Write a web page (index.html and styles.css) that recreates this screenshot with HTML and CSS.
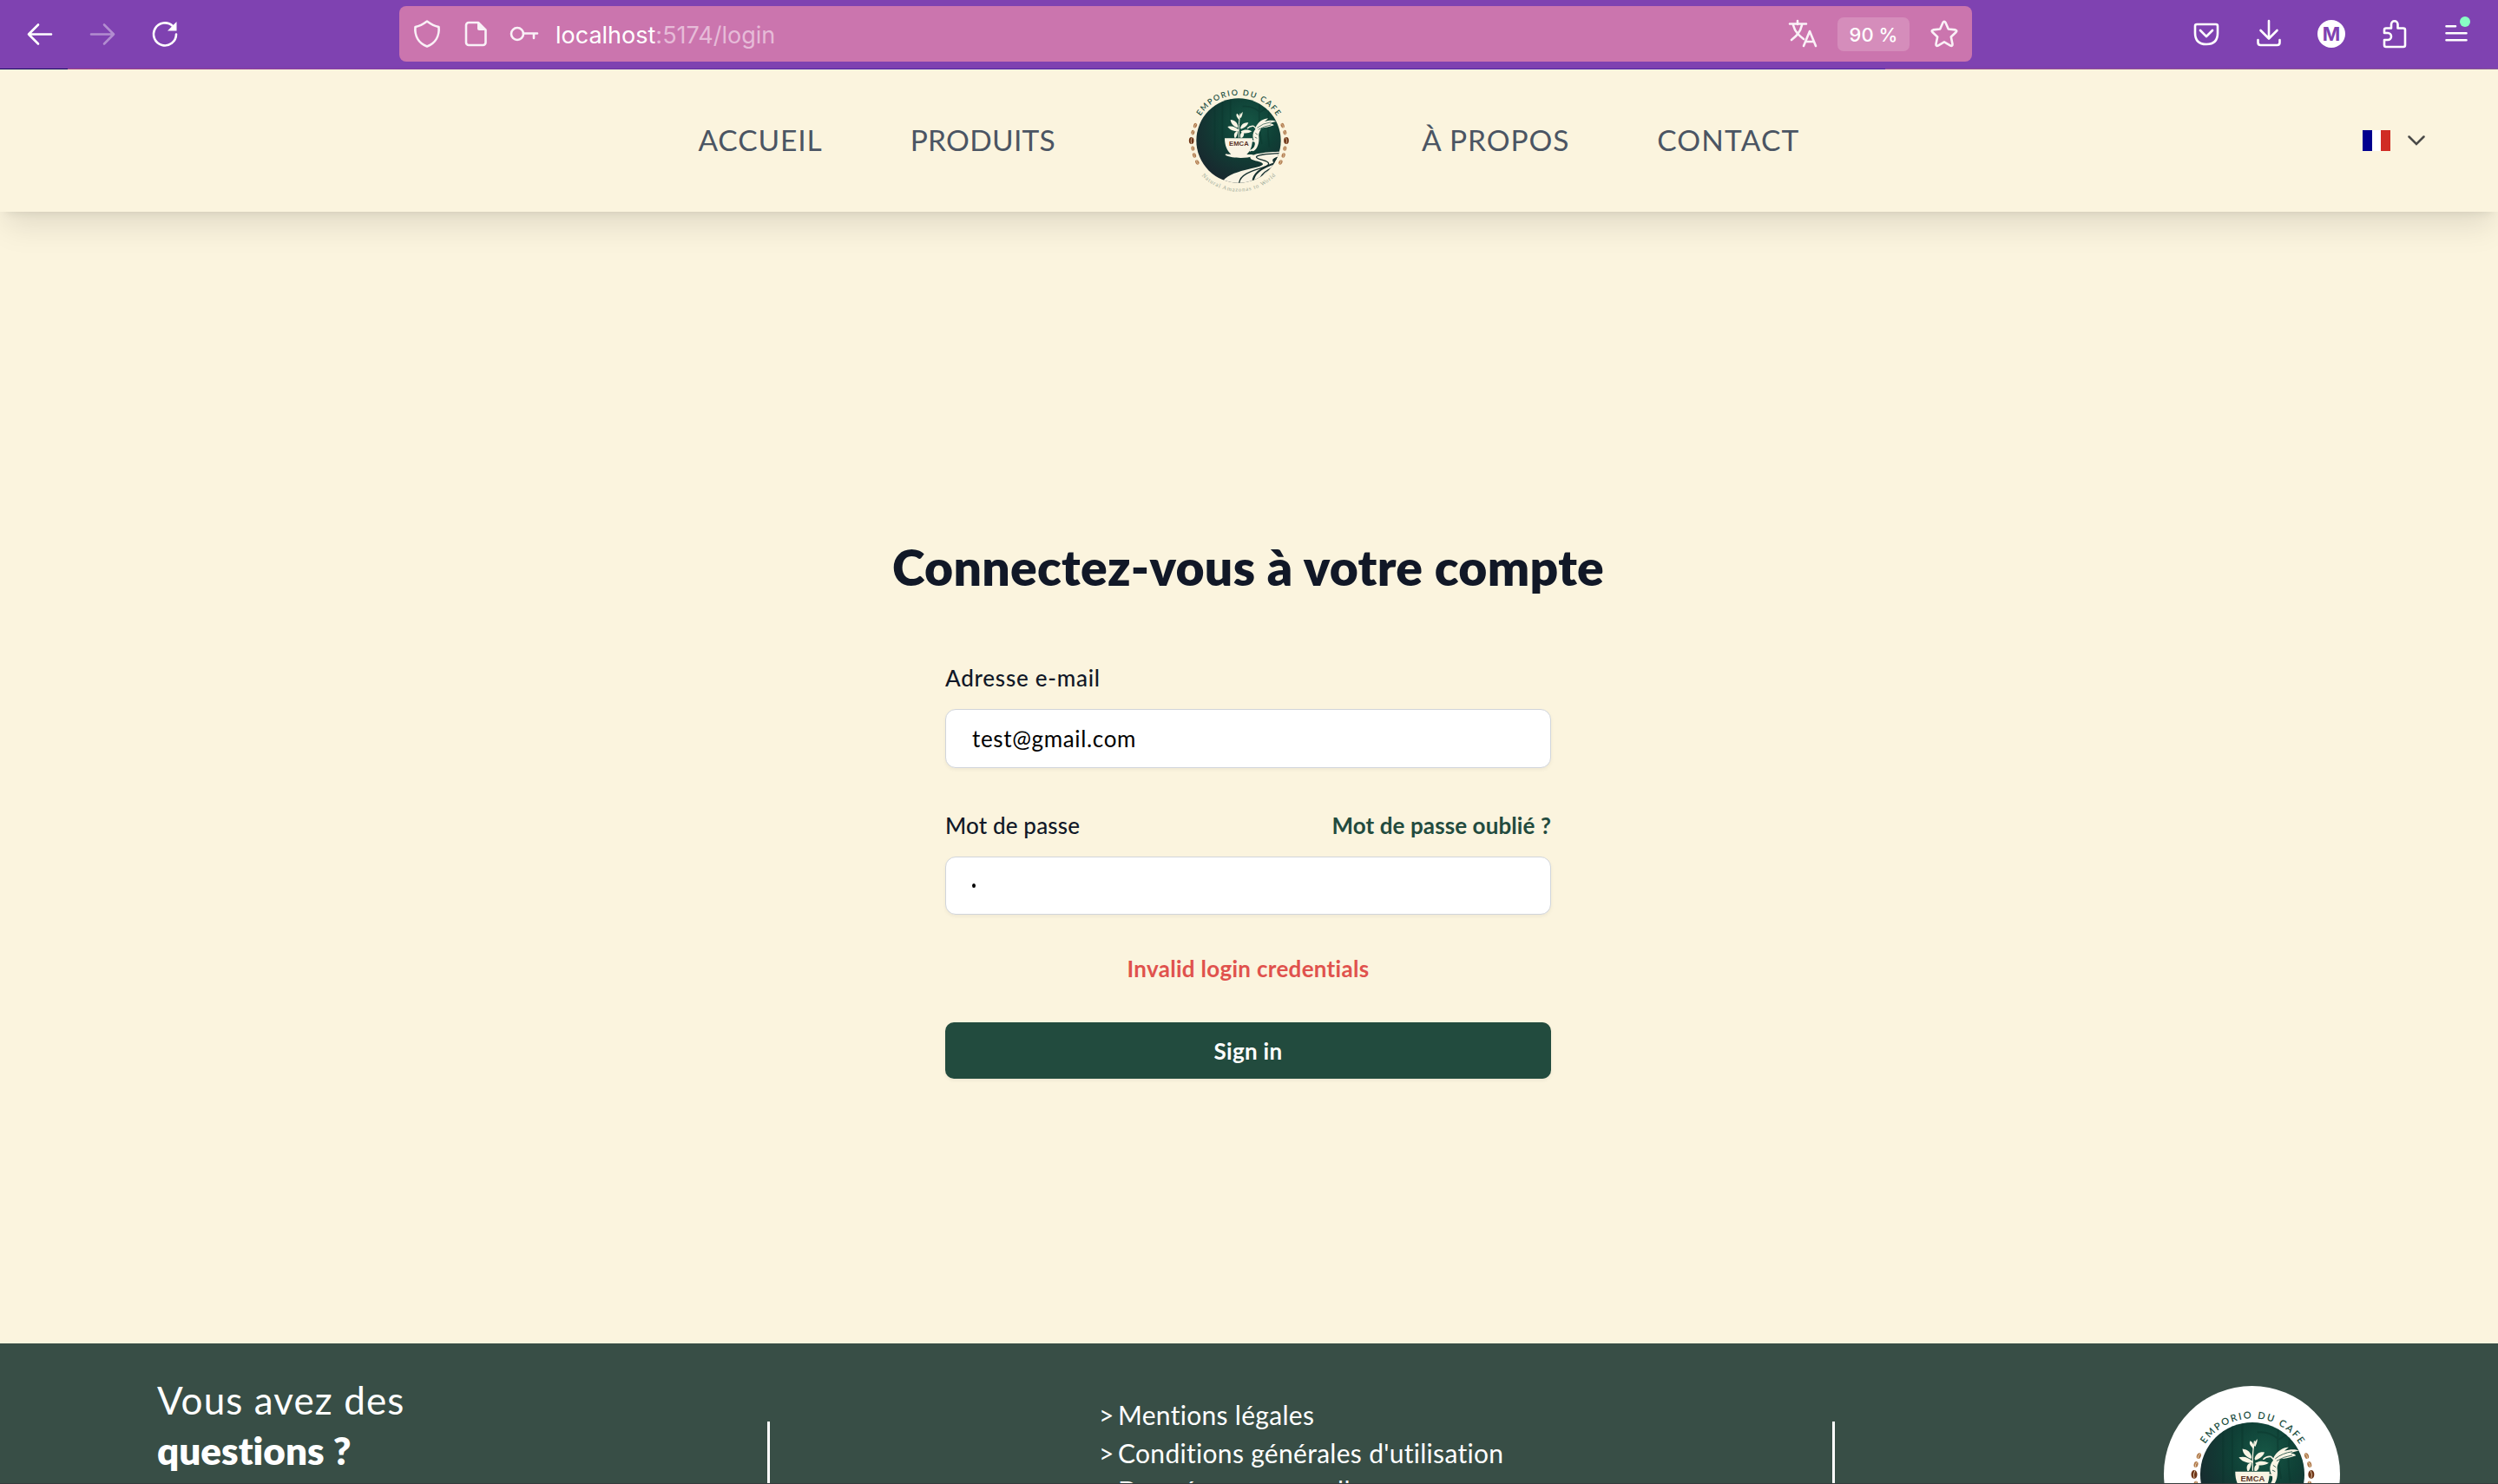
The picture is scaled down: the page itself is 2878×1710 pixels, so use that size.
FILE: index.html
```
<!DOCTYPE html>
<html lang="fr">
<head>
<meta charset="utf-8">
<title>Emporio du Café – Connexion</title>
<link rel="stylesheet" href="styles.css">
</head>
<body>
<svg class="defs" aria-hidden="true">
  <defs>
    <radialGradient id="forest" cx="0.62" cy="0.3" r="0.75">
      <stop offset="0" stop-color="#165645"/>
      <stop offset="0.45" stop-color="#0f4036"/>
      <stop offset="1" stop-color="#19272e"/>
    </radialGradient>
    <clipPath id="disc"><circle cx="260" cy="248" r="146"/></clipPath>
    <path id="arc-top" d="M103 248a157 157 0 0 1 314 0"/>
    <path id="arc-bottom" d="M90 248a170 170 0 0 0 340 0"/>
    <g id="bean">
      <ellipse rx="6" ry="8.5" fill="#b07a4d"/>
      <path d="M2-8q-5 8-2 16" fill="none" stroke="#f0dfc0" stroke-width="1.8"/>
    </g>
    <g id="beans">
      <use href="#bean" transform="translate(110 196) rotate(20)"/>
      <use href="#bean" transform="translate(102 220) rotate(12)"/>
      <g transform="translate(97 248)"><ellipse rx="8.5" ry="12" fill="#6f3517"/><path d="M2-11q-6 11-2 22" fill="none" stroke="#f0dfc0" stroke-width="2"/></g>
      <use href="#bean" transform="translate(102 275) rotate(-8)"/>
      <use href="#bean" transform="translate(107 299) rotate(-16)"/>
      <use href="#bean" transform="translate(117 323) rotate(-28)"/>
    </g>
  </defs>
  <symbol id="logo" viewBox="80 68 360 360">
    <circle cx="260" cy="248" r="146" fill="url(#forest)"/>
    <g clip-path="url(#disc)">
      <g fill="none" stroke="#0b352c" stroke-width="5" opacity=".45">
        <path d="M178 110v170M204 104v150M232 100v90M334 110q-8 60 6 150M366 140q-10 50 0 130M334 150q30-22 50-18M334 150q-26-24-60-20"/>
      </g>
      <path class="paper" d="M410 286C360 286 300 294 300 306c0 14 44 12 44 24 0 14-120 18-144 66v30h210V318q-16 0-30 2-12-10 30-20Z"/>
      <g fill="none" stroke="#15302f" stroke-linecap="round">
        <path d="M404 292c-50 2-86 6-82 14 8 10 42 10 42 22 0 18-96 20-102 66-1 8 2 14 6 20" stroke-width="4"/>
        <path d="M408 306c-26 2-30 14-22 20-54 18-76 40-76 64 0 10 2 18 8 26" stroke-width="7"/>
        <path d="M408 332c-52 12-82 36-78 76" stroke-width="4"/>
        <path d="M408 346c-40 10-62 30-58 60" stroke-width="6"/>
      </g>
    </g>
    <g class="paper">
      <path d="M212 240h96c0 26-6 44-20 56h14c8 0 12 3 8 6-22 8-72 8-94-3-6-3 0-5 6-4h12c-14-12-22-30-22-55Z"/>
      <path d="M262 212c-14-12-24-16-40-12 8 10 18 16 38 16ZM258 200c-2-14-10-22-26-24 2 14 10 22 24 28ZM266 204c4-14 14-20 28-18-4 12-14 18-26 22ZM268 216c14-8 26-6 38 0-12 8-26 8-36 4ZM262 176c-8-10-12-14-8-22 8 4 10 12 10 20ZM265 168c0-10 4-14 9-20 0 8-2 14-6 22ZM246 238c-4-14 0-20 12-24-2 12-4 18-8 24ZM266 238c-2-12 2-18 12-20 2 10 0 16-6 20Z"/>
      <path d="M318 204C328 180 352 170 362 172c-6 4-10 8-12 10 14-4 30-6 40 0-10 2-18 4-22 7 8 0 12 3 14 6-16 6-30 8-44 10-6 14-10 20-8 30 2 20-4 42-20 50l-6-4c10-8 14-18 12-28-10-16-8-32 2-44Z"/>
    </g>
    <g fill="none" class="paper-line">
      <path d="M261 238q-2-50 5-84" stroke-width="3"/>
      <path d="M290 206q10-10 22-8l8 8" stroke-width="4"/>
      <path d="M304 250q18-4 16 12-1 14-22 22" stroke-width="5"/>
    </g>
    <g stroke="#14473b" stroke-width="2" fill="none"><path d="M324 204q20-16 48-20M328 210q20-12 44-16M318 222l8 6M316 236l8 4"/></g>
    <text class="logo-cup" x="261" y="267" text-anchor="middle" textLength="68">EMCA</text>
    <text class="logo-top"><textPath href="#arc-top" startOffset="50%" text-anchor="middle" textLength="314">EMPORIO DU CAFE</textPath></text>
    <text class="logo-bottom"><textPath href="#arc-bottom" startOffset="50%" text-anchor="middle" textLength="276">Natural Amazonas to World</textPath></text>
    <use href="#beans"/>
    <use href="#beans" transform="matrix(-1 0 0 1 522 0)"/>
  </symbol>
</svg>

<div class="browser">
  <div class="tools tools-left">
    <svg class="ic" viewBox="0 0 32 32"><path d="M29 16.500H3M14 5.500 3 16.500l11 11"/></svg>
    <svg class="ic dim" viewBox="0 0 32 32"><path d="M3 16.500h26M18 5.500l11 11-11 11"/></svg>
    <svg class="ic" viewBox="0 0 32 32"><path d="M29 16.500a13 13 0 1 1-4-9.500"/><path class="solid" d="M29.500 2v10.500H19Z"/></svg>
  </div>
  <div class="urlbar">
    <svg class="ic soft" viewBox="0 0 32 32"><path d="M16 1.500c4 3 8 5.500 13.500 6.500C30.500 18 26 26.500 16 30.500 6 26.500 1.500 18 2.500 8 8 7 12 4.500 16 1.500Z"/></svg>
    <svg class="ic soft" viewBox="0 0 32 32"><path d="M8 3h11l8.500 8.500V26a3 3 0 0 1-3 3H8a3 3 0 0 1-3-3V6a3 3 0 0 1 3-3Z"/><path class="solid" d="M18 3l10 9h-8a2 2 0 0 1-2-2Z"/></svg>
    <svg class="ic soft" viewBox="0 0 32 32"><circle cx="8" cy="16" r="7"/><path d="M15 15.500h16M27 16v5"/></svg>
    <p class="url"><span class="host">localhost</span>:5174/login</p>
    <svg class="ic soft" viewBox="0 0 32 32"><path d="M1 4.500h19M10 1v4M5 6c2 8 7 12 12 16M15 6C13 15 8 19 3 23M17 30l7-17 7 17M19 25h10"/></svg>
    <span class="chip">90 %</span>
    <svg class="ic soft" viewBox="0 0 32 32"><path d="M14.500 3q1.500-2.500 3 0l3.300 7.500 8 .9q2.500.6.8 2.600l-5.800 5.500 1.700 8.300q.2 2.700-2.300 1.800L16 25.400l-7.200 4.200q-2.500.9-2.300-1.800l1.700-8.300L2.400 14q-1.700-2 .8-2.600l8-.9Z"/></svg>
  </div>
  <div class="tools tools-right">
    <svg class="ic" viewBox="0 0 32 32"><path d="M5 5h22q2 0 2 2v8q0 13-13 13T3 15V7q0-2 2-2ZM9 12l7 7 7-7"/></svg>
    <svg class="ic" viewBox="0 0 32 32"><path d="M16 1v20M6.500 12 16 21.500l9.500-9.500M3.500 23v3q0 3 3 3h19q3 0 3-3v-3"/></svg>
    <span class="avatar">M</span>
    <svg class="ic" viewBox="0 0 32 32"><path d="M13 9.500V5a3.700 3.700 0 0 1 7.500 0v4.500H27q2 0 2 2V29q0 2-2 2H7q-2 0-2-2v-6h4a4 4 0 0 0 0-8H5v-3.500q0-2 2-2Z"/></svg>
    <svg class="ic menu" viewBox="0 0 32 32"><path d="M4.500 7.300H15M4.500 15.300h23M4.500 23.300h23"/><circle cx="26" cy="2" r="6"/></svg>
  </div>
</div>

<header class="nav">
  <span></span>
  <nav class="links">
    <a class="l1">ACCUEIL</a>
    <a class="l2">PRODUITS</a>
    <svg class="nav-logo"><use href="#logo"/></svg>
    <a class="l3">À PROPOS</a>
    <a class="l4">CONTACT</a>
  </nav>
  <div class="lang">
    <span class="flag"><i class="blue"></i><i class="white"></i><i class="red"></i></span>
    <svg class="chev" viewBox="0 0 20 12"><path d="M1.500 1.500 10 10l8.500-8.500"/></svg>
  </div>
</header>

<main class="main">
  <h1 class="title">Connectez-vous à votre compte</h1>
  <form class="form">
    <div class="row"><label class="label lb1">Adresse e-mail</label></div>
    <div class="field"><span class="value">test@gmail.com</span></div>
    <div class="row row-2"><label class="label lb2">Mot de passe</label><a class="forgot">Mot de passe oublié ?</a></div>
    <div class="field field-2"><span class="dot"></span></div>
    <p class="error">Invalid login credentials</p>
    <div class="submit">Sign in</div>
  </form>
</main>

<footer class="footer">
  <div class="ask"><p class="ask-1">Vous avez des</p><p class="ask-2">questions ?</p></div>
  <div class="rule"></div>
  <ul class="legal">
    <li><span class="gt">&gt;</span>Mentions légales</li>
    <li><span class="gt">&gt;</span>Conditions générales d'utilisation</li>
    <li><span class="gt">&gt;</span>Données personnelles</li>
  </ul>
  <div class="rule"></div>
  <div class="badge"><svg class="badge-logo"><use href="#logo"/></svg></div>
</footer>
</body>
</html>
```
FILE: styles.css
```
* { box-sizing: border-box; margin: 0; padding: 0; }

body {
  width: 2878px;
  height: 1710px;
  overflow: hidden;
  display: flex;
  flex-direction: column;
  background: #fbf4de;
  color: #111827;
  font-family: Lato, "Liberation Sans", sans-serif;
  font-variant-ligatures: none;
}

.defs { position: absolute; width: 0; height: 0; }

/* Browser toolbar */
.browser {
  flex: none;
  display: flex;
  align-items: flex-start;
  height: 80px;
  background:
    linear-gradient(90deg, #120a5c 0 78px, #a3467f 78px, #8a42a0 400px, #4d28a2 960px, #4d28a2 2172px, #9a5290 2172px, #8a5a90) 0 79px / 100% 1px no-repeat,
    #7f42b1;
}
.tools { display: flex; gap: 40px; padding-top: 23px; }
.tools-left { padding-left: 30px; width: 460px; }
.tools-right { padding-left: 254px; }
.ic { width: 32px; height: 32px; overflow: visible; fill: none; stroke: #fff; stroke-width: 2.6; stroke-linecap: round; stroke-linejoin: round; flex: none; }
.ic .solid { fill: #fff; stroke: none; }
.dim { opacity: .4; }
.soft { opacity: .9; }
.menu circle { fill: #88ffc4; stroke: none; }
.urlbar {
  display: flex;
  align-items: center;
  gap: 24px;
  width: 1812px;
  height: 64px;
  margin-top: 7px;
  padding: 0 16px;
  border-radius: 8px;
  background: #cb75ae;
}
.url { flex: 1; margin-left: -4px; padding-top: 3px; font: 27px/32px Inter, sans-serif; color: #e6bbd8; }
.host { color: #fff; }
.chip { width: 83px; height: 39px; border-radius: 7px; background: #d58dbb; color: #fff; font: 500 22px/40px Inter, sans-serif; text-align: center; }
.avatar { width: 32px; height: 32px; border-radius: 50%; background: #fff; color: #7f42b1; font: 700 22px/32px Inter, sans-serif; text-align: center; }

/* Site header */
.nav {
  flex: none;
  display: grid;
  grid-template-columns: 1fr auto 1fr;
  align-items: center;
  height: 164px;
  background: #fbf4de;
  box-shadow: 0 22px 34px -6px rgba(0, 0, 0, .1), 0 7px 11px -7px rgba(0, 0, 0, .1);
}
.links { display: flex; align-items: center; padding: 0 0 2px 0; font-size: 33.5px; line-height: 48px; color: #4b5563; }
.l1 { margin-right: 101px; letter-spacing: .9px; }
.l2 { letter-spacing: .3px; }
.l3 { margin-right: 101px; letter-spacing: .9px; }
.l4 { letter-spacing: 1.2px; }
.nav-logo { width: 120px; height: 120px; margin: 1px 151px -1px 151px; }
.lang { display: flex; align-items: center; justify-content: flex-end; gap: 20px; padding-right: 84px; }
.flag { display: flex; width: 32px; height: 24px; }
.flag i { flex: 1; }
.blue { background: #00008f; }
.white { background: #fff; }
.red { background: #d02c24; }
.chev { width: 20px; height: 12px; fill: none; stroke: #4a4a48; stroke-width: 2.5; stroke-linecap: round; }

/* Logo artwork */
.paper { fill: #f9f4e4; }
.paper-line { stroke: #f9f4e4; }
.logo-cup { font: 700 23px "Liberation Sans", sans-serif; fill: #5b3429; }
.logo-top { font: 600 27px Lato, sans-serif; fill: #1c4f42; }
.logo-bottom { font: 20px "Liberation Serif", serif; fill: #9aa796; dominant-baseline: middle; }

/* Login form */
.main { flex: none; height: 1304px; display: flex; flex-direction: column; align-items: center; padding: 373px 2px 0 0; }
.title { font-size: 57px; line-height: 72px; font-weight: 800; letter-spacing: .3px; white-space: nowrap; }
.form { width: 698px; padding-top: 70px; }
.row { display: flex; justify-content: space-between; height: 44px; font-size: 26px; line-height: 44px; }
.row-2 { margin-top: 44px; }
.label { font-weight: 500; }
.lb1 { letter-spacing: .75px; }
.lb2 { letter-spacing: .15px; }
.forgot { font-weight: 700; letter-spacing: .1px; color: #234b3e; }
.field {
  display: flex;
  align-items: center;
  height: 68px;
  margin-top: 14px;
  padding: 0 30px;
  border: 1px solid #d1d5db;
  border-radius: 12px;
  background: #fff;
  color: #000;
  font-size: 26px;
  box-shadow: 0 2px 4px rgba(0, 0, 0, .05);
}
.value { letter-spacing: .65px; }
.field-2 { height: 67px; }
.dot { width: 4px; height: 5px; border-radius: 50%; background: #000; }
.error { margin-top: 40px; font-size: 26px; line-height: 44px; font-weight: 700; letter-spacing: .3px; color: #e0524d; text-align: center; }
.submit { height: 65px; margin-top: 40px; border-radius: 10px; background: #224b3e; color: #fff; font-size: 26px; line-height: 66px; font-weight: 700; letter-spacing: .3px; text-align: center; box-shadow: 0 2px 4px rgba(0, 0, 0, .06); }

/* Footer */
.footer { flex: none; display: flex; height: 162px; background: #384e46; border-bottom: 1px solid #363c3d; color: #fff; overflow: hidden; }
.ask { width: 884px; padding: 36px 0 0 181px; font-size: 44px; line-height: 58px; }
.ask-1 { letter-spacing: 1.1px; }
.ask-2 { font-weight: 800; letter-spacing: 0; }
.rule { width: 3px; height: 120px; margin-top: 90px; background: #fff; flex: none; }
.legal { width: 1224px; padding: 61px 0 0 379px; list-style: none; font-size: 30px; line-height: 43.7px; letter-spacing: .3px; }
.legal li { display: flex; }
.gt { width: 22px; }
.badge { display: grid; place-items: center; flex: none; width: 203px; height: 203px; margin: 49px 0 0 379px; border-radius: 50%; background: #fff; }
.badge-logo { width: 148px; height: 148px; }
```
